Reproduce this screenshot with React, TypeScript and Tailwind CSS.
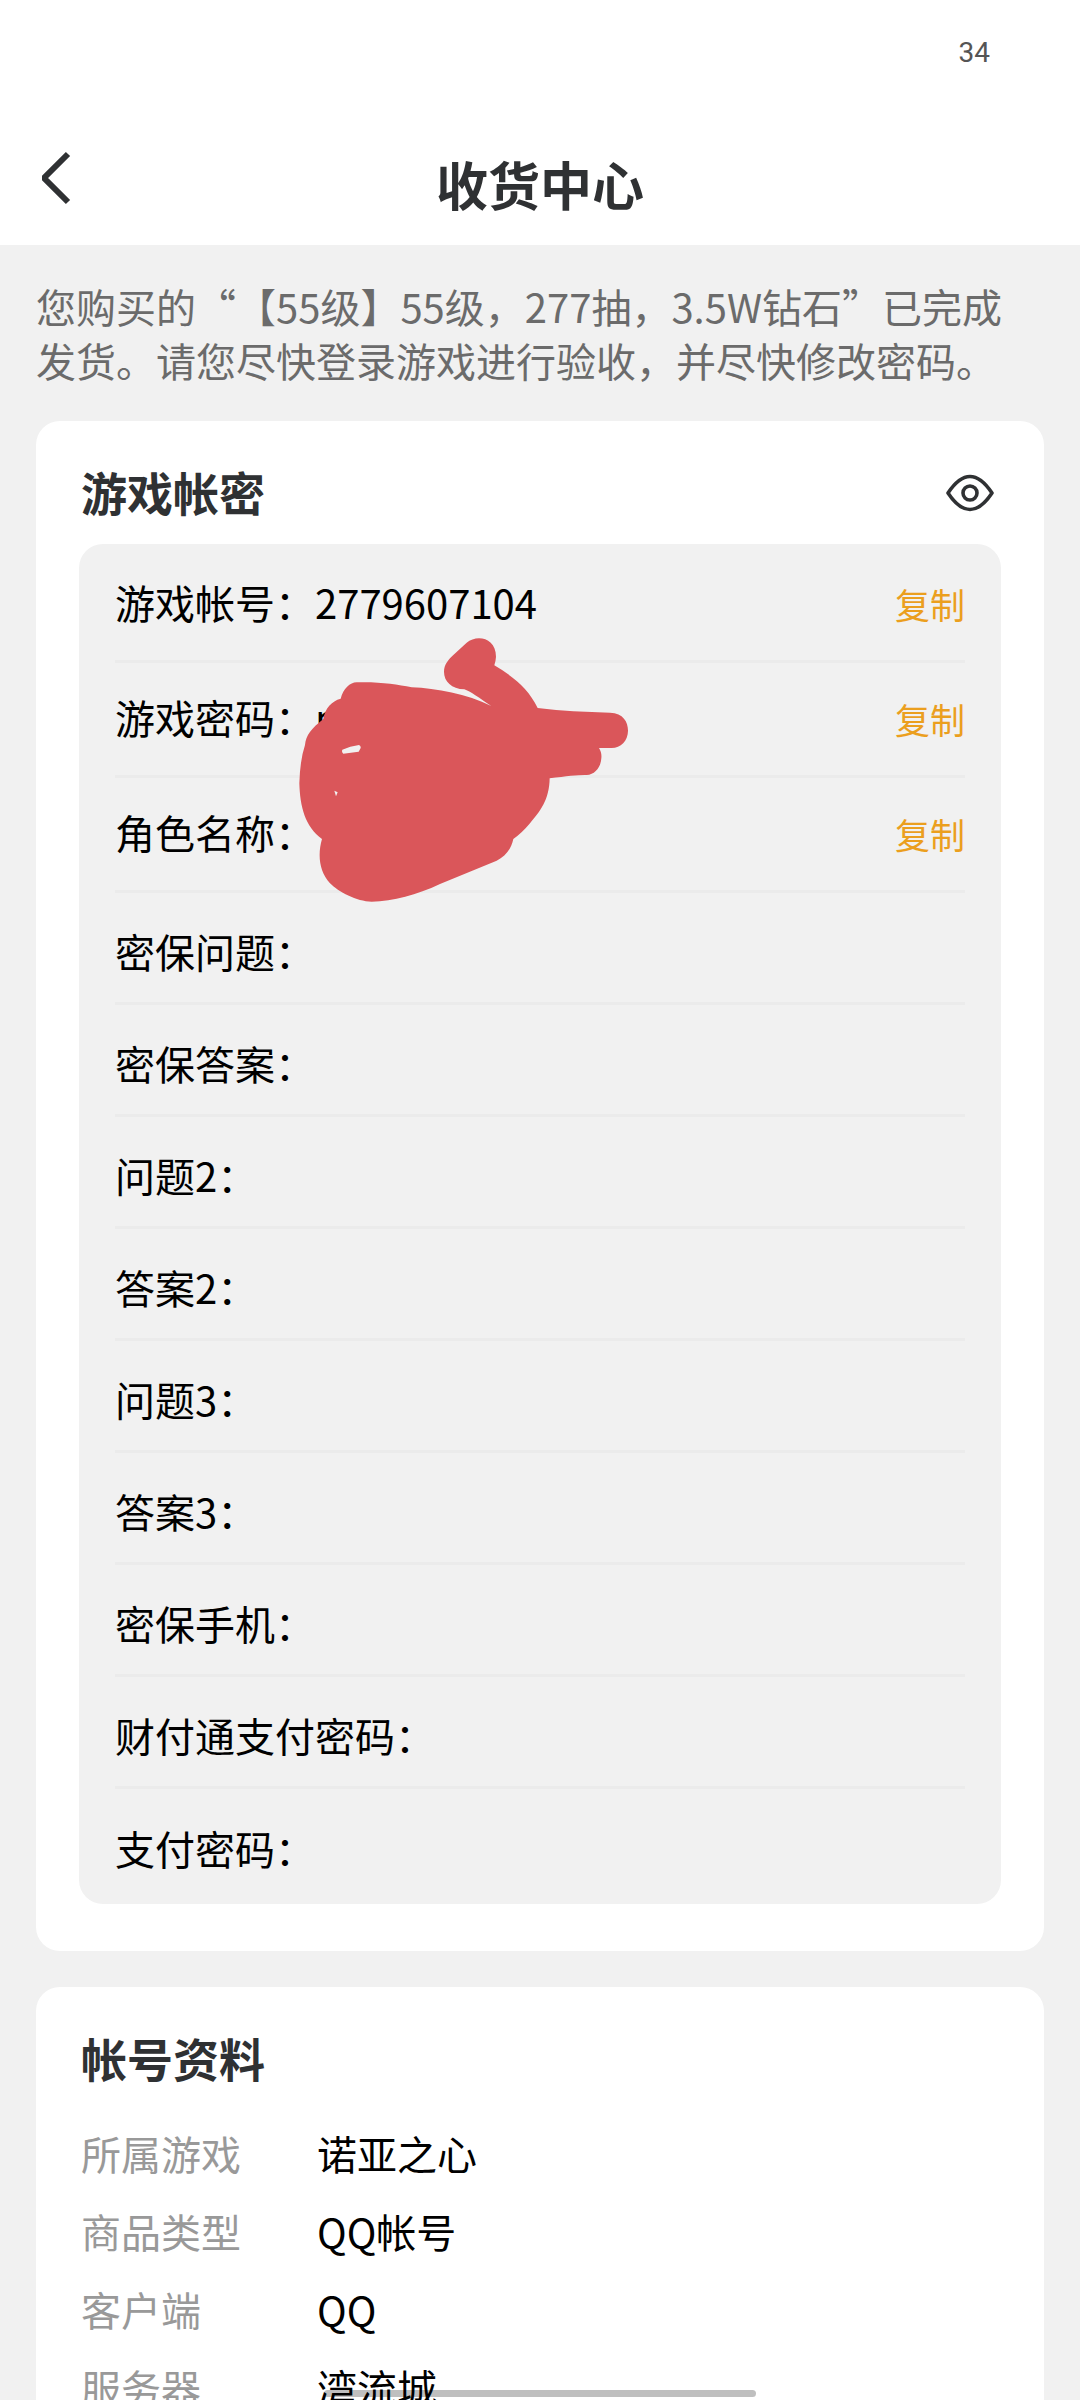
import { ReactNode } from "react";

const credentials = [
  { label: "游戏帐号", value: "2779607104", copy: true },
  { label: "游戏密码", value: "n", copy: true },
  { label: "角色名称", value: "", copy: true },
  { label: "密保问题", value: "" },
  { label: "密保答案", value: "" },
  { label: "问题2", value: "" },
  { label: "答案2", value: "" },
  { label: "问题3", value: "" },
  { label: "答案3", value: "" },
  { label: "密保手机", value: "" },
  { label: "财付通支付密码", value: "" },
  { label: "支付密码", value: "" },
];

const details = [
  { label: "所属游戏", value: "诺亚之心" },
  { label: "商品类型", value: "QQ帐号" },
  { label: "客户端", value: "QQ" },
  { label: "服务器", value: "湾流城" },
];

function Card({ title, action, children }: { title: string; action?: ReactNode; children: ReactNode }) {
  return (
    <section className="bg-white rounded-3xl px-[43px] pb-[47px]">
      <div className="flex items-center justify-between h-[123px] pt-4 pl-0.5 pr-[7px]">
        <h2 className="text-[46px] leading-[60px] font-bold text-[#2f3133]">{title}</h2>
        {action}
      </div>
      {children}
    </section>
  );
}

function EyeButton() {
  return (
    <button aria-label="显示密码" className="pt-1">
      <svg width="48" height="38" viewBox="0 0 48 38" fill="none" stroke="#2f3133" strokeWidth="3.6">
        <path
          d="M2 19C8 10 15 2.500 24 2.500S40 10 46 19C40 28 33 35.500 24 35.500S8 28 2 19Z"
          strokeLinejoin="round"
        />
        <circle cx="24" cy="19" r="7" />
      </svg>
    </button>
  );
}

// marker scribble that hides the password and the role name
function Scribble() {
  return (
    <svg
      className="absolute left-[201px] top-[76px] w-[380px] h-[300px] pointer-events-none"
      viewBox="0 0 1140 900"
      fill="#da565a"
      fillRule="evenodd"
      aria-hidden="true"
    >
      <path d="M230 187C300 185 350 193 395 202C470 205 560 222 634 258C600 236 570 213 553 208C515 206 492 185 492 155C492 135 505 118 520 105L560 68C590 42 648 52 648 110Q647 125 643 136C700 170 745 205 773 264Q830 271 880 274L990 278C1030 280 1044 305 1044 332C1044 362 1022 384 995 384L957 384C964 396 965 405 964 415C962 442 945 464 920 465Q890 464 809 475C808 540 780 575 750 610Q725 640 700 657C693 690 675 708 650 722L480 792C410 825 340 844 275 845C230 845 175 815 150 790C118 755 112 705 126 657C75 620 60 560 58 490Q60 420 75 375C78 345 95 325 130 297C135 265 155 243 182 236C190 205 210 188 230 187ZM187 389Q210 378 237 375Q243 377 242 384L236 395L190 401Q184 397 187 389ZM163 512L173 517L168 529Z" />
    </svg>
  );
}

export default function App() {
  return (
    <div
      lang="zh-CN"
      className="h-screen flex flex-col bg-[#f1f1f1] text-black font-['Noto_Sans_CJK_SC',sans-serif] [text-spacing-trim:space-all]"
    >
      <header className="bg-white shrink-0">
        <div className="h-[106px] flex items-center justify-end pr-[90px]">
          <span className="font-[Roboto,sans-serif] text-[28px] text-[#555]">34</span>
        </div>
        <div className="h-[139px] grid grid-cols-[1fr_auto_1fr] items-center px-9">
          <button aria-label="返回" className="justify-self-start pt-1">
            <svg width="38" height="56" viewBox="0 0 38 56" fill="none" stroke="#2f3133" strokeWidth="6">
              <path d="M32 4L9 27V29L32 52" />
            </svg>
          </button>
          <h1 className="text-[52px] leading-[72px] pt-4 font-bold text-[#2f3133]">收货中心</h1>
        </div>
      </header>

      <main className="flex-1 min-h-0 overflow-y-auto [scrollbar-width:none] px-9 pt-[34px]">
        <p className="text-[40px] leading-[54px] text-[#6b6b6b] mb-[34px] pr-6">
          您购买的“【55级】55级，277抽，3.5W钻石”已完成发货。请您尽快登录游戏进行验收，并尽快修改密码。
        </p>

        <Card title="游戏帐密" action={<EyeButton />}>
          <div className="relative bg-[#f1f1f1] rounded-3xl px-9 pt-1 pb-[3px]">
            <ul className="divide-y-3 divide-[#ebebeb]">
              {credentials.map((item) => (
                <li
                  key={item.label}
                  className={item.copy ? "flex items-center h-[115px] pb-0.5" : "flex items-center h-[112px] pt-1.5"}
                >
                  <div className="flex-1 flex items-baseline justify-between text-[40px] leading-[54px]">
                    <span>
                      {item.label}：{item.value}
                    </span>
                    {item.copy && <button className="text-[35px] text-[#eb9f1e]">复制</button>}
                  </div>
                </li>
              ))}
            </ul>
            <Scribble />
          </div>
        </Card>

        <div className="h-9" />

        <Card title="帐号资料">
          <dl className="pl-0.5 pt-1 text-[40px] leading-[78px]">
            {details.map((item) => (
              <div key={item.label} className="flex">
                <dt className="w-[236px] text-[#999]">{item.label}</dt>
                <dd>{item.value}</dd>
              </div>
            ))}
          </dl>
        </Card>
      </main>

      {/* home indicator */}
      <div className="fixed bottom-[3px] left-1/2 -translate-x-1/2 w-2/5 h-[7px] rounded-full bg-black/25" />
    </div>
  );
}
